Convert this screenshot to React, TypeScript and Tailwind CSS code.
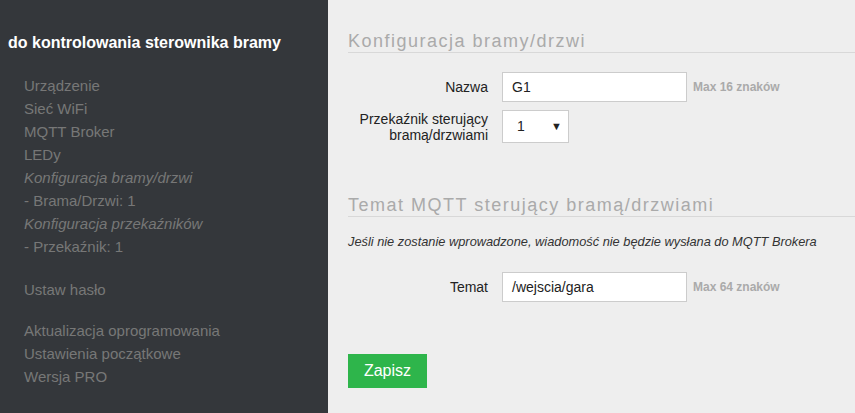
export default function App() {
    const menu = [
        { label: "Urządzenie" },
        { label: "Sieć WiFi" },
        { label: "MQTT Broker" },
        { label: "LEDy" },
        { label: "Konfiguracja bramy/drzwi", italic: true },
        { label: "- Brama/Drzwi: 1" },
        { label: "Konfiguracja przekaźników", italic: true },
        { label: "- Przekaźnik: 1" },
        { label: "", spacer: true, h: "h-[20px]" },
        { label: "Ustaw hasło" },
        { label: "", spacer: true, h: "h-[18px]" },
        { label: "Aktualizacja oprogramowania" },
        { label: "Ustawienia początkowe" },
        { label: "Wersja PRO" },
    ];

    return (
        <div className="flex min-h-[413px] w-full bg-[#eeeeee] font-['Liberation_Sans',Arial,sans-serif]">
            {/* Side menu */}
            <div className="w-[328px] shrink-0 bg-[#34373b] pt-[32px]">
                <div className="pl-[8px] text-[16px] font-bold leading-[22px] text-white">do kontrolowania sterownika bramy</div>
                <ul className="mt-[20px] pl-[24px]">
                    {menu.map((m, i) =>
                        m.spacer ? (
                            <li key={i} className={m.h} />
                        ) : (
                            <li key={i} className={`text-[15px] leading-[23px] text-[#777777] ${m.italic ? "italic" : ""}`}>
                                {m.label}
                            </li>
                        )
                    )}
                </ul>
            </div>

            {/* Main content */}
            <div className="flex-1 pl-[20px] pt-[30px]">
                <h2 className="border-b border-[#d8d8d8] text-[18px] leading-[22px] tracking-[1.5px] text-[#aaaaaa]">Konfiguracja bramy/drzwi</h2>

                <div className="mt-[19px] flex items-center">
                    <label className="w-[140px] text-right text-[14px] text-[#222]">Nazwa</label>
                    <div className="ml-[14px] flex h-[30px] w-[185px] items-center border border-[#cccccc] bg-white pl-[9px] text-[14px] text-[#222]">G1</div>
                    <span className="ml-[6px] text-[12px] font-bold text-[#aaaaaa]">Max 16 znaków</span>
                </div>

                <div className="mt-[8px] flex items-center">
                    <label className="w-[140px] text-right text-[14px] leading-[16px] text-[#222]">
                        Przekaźnik sterujący
                        <br />
                        bramą/drzwiami
                    </label>
                    <div className="ml-[14px] flex h-[33px] w-[67px] items-center justify-between border border-[#cccccc] bg-white pl-[14px] pr-[6px] text-[14px] text-[#222]">
                        <span>1</span>
                        <span className="text-[11px]">▼</span>
                    </div>
                </div>

                <h2 className="mt-[51px] border-b border-[#d8d8d8] text-[18px] leading-[22px] tracking-[1.5px] text-[#aaaaaa]">Temat MQTT sterujący bramą/drzwiami</h2>

                <p className="mt-[17px] text-[12.8px] italic leading-[16px] text-[#333]">Jeśli nie zostanie wprowadzone, wiadomość nie będzie wysłana do MQTT Brokera</p>

                <div className="mt-[22px] flex items-center">
                    <label className="w-[140px] text-right text-[14px] text-[#222]">Temat</label>
                    <div className="ml-[14px] flex h-[30px] w-[185px] items-center border border-[#cccccc] bg-white pl-[9px] text-[14px] text-[#222]">/wejscia/gara</div>
                    <span className="ml-[6px] text-[12px] font-bold text-[#aaaaaa]">Max 64 znaków</span>
                </div>

                <button className="mt-[52px] h-[34px] w-[79px] bg-[#2eb54b] text-[16px] text-white">Zapisz</button>
            </div>
        </div>
    );
}
